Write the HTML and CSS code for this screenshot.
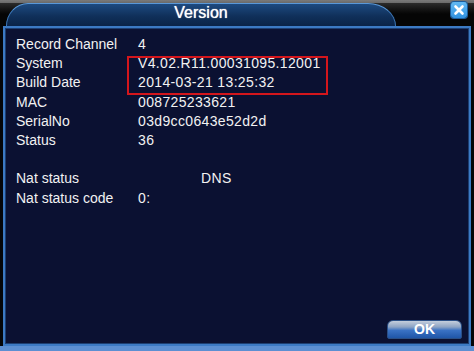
FILE: index.html
```html
<!DOCTYPE html>
<html lang="en">
<head>
  <meta charset="UTF-8">
  <title>Version</title>
  <link rel="stylesheet" href="styles.css">
</head>
<body>
  <div class="window">
    <div class="titlebar">
      <div class="tab">Version</div>
      <div class="close-btn">
        <svg width="16" height="16" viewBox="0 0 16 16">
          <path d="M4.5 4.5 L11.5 11.5 M11.5 4.5 L4.5 11.5" stroke="#fff" stroke-width="2.6" stroke-linecap="round"/>
        </svg>
      </div>
    </div>

    <div class="panel">
      <div class="info">
        <div class="row"><span class="label">Record Channel</span><span class="value">4</span></div>
        <div class="highlight">
          <div class="row"><span class="label">System</span><span class="value">V4.02.R11.00031095.12001</span></div>
          <div class="row"><span class="label">Build Date</span><span class="value">2014-03-21 13:25:32</span></div>
        </div>
        <div class="row"><span class="label">MAC</span><span class="value">008725233621</span></div>
        <div class="row"><span class="label">SerialNo</span><span class="value">03d9cc0643e52d2d</span></div>
        <div class="row"><span class="label">Status</span><span class="value">36</span></div>

        <div class="row gap"><span class="label">Nat status</span><span class="value dns">DNS</span></div>
        <div class="row"><span class="label">Nat status code</span><span class="value">0:</span></div>
      </div>

      <div class="footer">
        <button class="ok-btn">OK</button>
      </div>
    </div>

    <div class="strip"></div>
  </div>
</body>
</html>
```

FILE: styles.css
```css
body {
  margin: 0;
  padding: 0;
  background: #050608;
  font-family: 'Liberation Sans', Arial, sans-serif;
  color: #f2f2f2;
  overflow: hidden;
}
.window {
  width: 474px;
  height: 351px;
  display: flex;
  flex-direction: column;
}
.titlebar {
  height: 26px;
  display: flex;
  align-items: flex-start;
  background: linear-gradient(#7a7a7a 0, #6a6a6a 3px, #2c2c2c 3px, #151515 9px, #050505 14px);
}
.tab {
  margin-left: 6px;
  margin-top: 3px;
  width: 390px;
  height: 23px;
  box-sizing: border-box;
  border: 1px solid #3d79bb;
  border-top-color: #5a98d8;
  border-bottom: none;
  border-radius: 22px 28px 0 0 / 23px 23px 0 0;
  background: linear-gradient(#1d4a80, #10305a 55%, #0b2448);
  text-align: center;
  font-size: 16px;
  line-height: 18px;
  color: #fff;
  text-shadow: 0 0 1px #fff;
}
.close-btn {
  margin-left: auto;
  margin-right: 7px;
  margin-top: 2px;
  width: 16px;
  height: 16px;
  border-radius: 3px;
  background: linear-gradient(#62baf4, #3192e0);
  box-shadow: 0 0 0 1px #1c5d9c;
}
.close-btn svg {
  display: block;
}
.panel {
  flex: 1;
  margin: 0 3px;
  border: 2px solid #3c7ac4;
  box-shadow: inset 0 0 0 1px #1d3f72;
  background: #0b1132;
  display: flex;
  flex-direction: column;
}
.info {
  padding: 7px 0 0 11px;
  font-size: 14px;
  line-height: 19.2px;
}
.row {
  display: flex;
}
.label {
  width: 122px;
  flex-shrink: 0;
}
.value {
  letter-spacing: 0.35px;
}
.value.dns {
  padding-left: 63px;
}
.row.gap {
  margin-top: 19.2px;
}
.highlight {
  position: relative;
}
.highlight::after {
  content: '';
  position: absolute;
  top: 2px;
  left: 111px;
  width: 201px;
  height: 39px;
  box-sizing: border-box;
  border: 2px solid #d4161c;
}
.footer {
  margin-top: auto;
  display: flex;
  justify-content: flex-end;
  padding: 0 7px 5px 0;
}
.ok-btn {
  width: 75px;
  height: 19px;
  padding: 0;
  border: 1px solid #2a4f86;
  border-radius: 6px 6px 2px 2px;
  background: linear-gradient(#c4cedc 0, #8ea4c4 35%, #3a72c4 55%, #1f56a8 100%);
  color: #fff;
  font-family: inherit;
  font-size: 14px;
  font-weight: bold;
  line-height: 17px;
  cursor: pointer;
}
.strip {
  height: 5px;
  background: #5c8fd2;
}
```
